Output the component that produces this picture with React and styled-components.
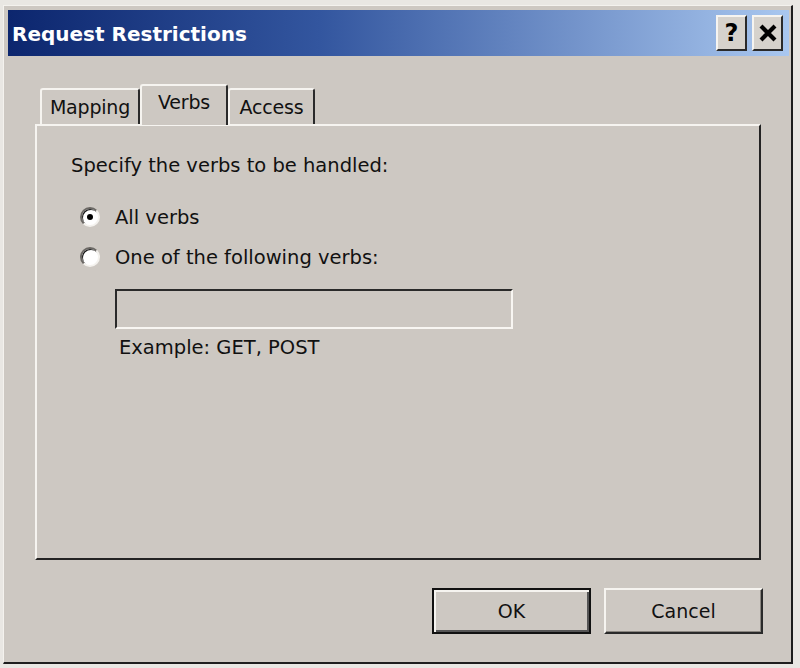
import styled, { createGlobalStyle } from "styled-components";

const GlobalStyle = createGlobalStyle`
  html, body {
    margin: 0;
    padding: 0;
    background: #e9e7e3;
    overflow: hidden;
  }
  * {
    box-sizing: border-box;
  }
`;

const Screen = styled.div`
  width: 800px;
  height: 668px;
  padding: 5px 0 0 3px;
  font-family: "DejaVu Sans", Verdana, sans-serif;
  color: #111;
`;

const Window = styled.div`
  width: 790px;
  height: 659px;
  background: #cdc8c2;
  border-top: 1px solid #f4f2ee;
  border-left: 1px solid #f4f2ee;
  border-right: 2px solid #1e1e1e;
  border-bottom: 2px solid #1e1e1e;
  padding: 4px 2px 0 4px;
  display: flex;
  flex-direction: column;
`;

const TitleBar = styled.div`
  height: 46px;
  display: flex;
  align-items: center;
  padding: 0 6px 0 4px;
  background: linear-gradient(to right, #0c266e 0%, #33569f 40%, #a9c7ef 100%);
`;

const Title = styled.div`
  flex: 1;
  color: #fff;
  font-weight: bold;
  font-size: 20px;
  padding-top: 2px;
`;

const TitleButton = styled.div`
  width: 31px;
  height: 36px;
  background: #d6d2cc;
  border-top: 2px solid #f6f4f0;
  border-left: 2px solid #f6f4f0;
  border-right: 2px solid #2a2a2a;
  border-bottom: 2px solid #2a2a2a;
  display: flex;
  align-items: center;
  justify-content: center;
  font-weight: bold;
  font-size: 24px;
  color: #000;

  & + & {
    margin-left: 5px;
  }
`;

const Body = styled.div`
  flex: 1;
  display: flex;
  flex-direction: column;
  padding: 28px 28px 0 27px;
`;

const TabRow = styled.div`
  height: 40px;
  display: flex;
  align-items: flex-end;
  padding-left: 5px;
  position: relative;
  z-index: 1;
`;

const Tab = styled.div`
  width: ${(p) => p.$w}px;
  height: ${(p) => (p.$active ? 41 : 36)}px;
  margin-bottom: ${(p) => (p.$active ? -1 : 0)}px;
  background: #cdc8c2;
  border-top: 2px solid #f6f4f0;
  border-left: 2px solid #f6f4f0;
  border-right: 2px solid #2a2a2a;
  border-radius: 3px 3px 0 0;
  display: flex;
  justify-content: center;
  padding-top: ${(p) => (p.$active ? 5 : 6)}px;
  font-size: 19px;
  letter-spacing: -0.2px;
`;

const Panel = styled.div`
  height: 436px;
  border-top: 2px solid #f6f4f0;
  border-left: 2px solid #f6f4f0;
  border-right: 2px solid #232323;
  border-bottom: 2px solid #232323;
  padding: 28px 0 0 34px;
  display: flex;
  flex-direction: column;
  align-items: flex-start;
  font-size: 19.5px;
`;

const Label = styled.div`
  height: 24px;
  line-height: 24px;
`;

const RadioRow = styled.div`
  height: 24px;
  display: flex;
  align-items: center;
  gap: 15px;
  margin-top: ${(p) => p.$top}px;
  padding-left: 9px;
`;

const RadioCircle = styled.span`
  width: 20px;
  height: 20px;
  border-radius: 50%;
  background: #fff;
  border: 2px solid;
  border-color: #6b6864 #f4f2ee #f4f2ee #6b6864;
  box-shadow: inset 1px 1px 0 #1c1c1c;
  display: flex;
  align-items: center;
  justify-content: center;

  &::after {
    content: "";
    width: 6px;
    height: 6px;
    border-radius: 50%;
    background: #000;
    display: ${(p) => (p.$checked ? "block" : "none")};
  }
`;

const Field = styled.div`
  width: 398px;
  height: 40px;
  margin: 20px 0 0 44px;
  background: #cdc8c2;
  border-top: 2px solid #2a2a2a;
  border-left: 2px solid #2a2a2a;
  border-right: 2px solid #f8f6f2;
  border-bottom: 2px solid #f8f6f2;
`;

const Hint = styled.div`
  height: 24px;
  line-height: 24px;
  margin: 7px 0 0 48px;
`;

const ButtonRow = styled.div`
  display: flex;
  justify-content: flex-end;
  gap: 13px;
  margin: 28px -2px 0 0;
`;

const Button = styled.div`
  width: 159px;
  height: 46px;
  display: flex;
  align-items: center;
  justify-content: center;
  font-size: 19px;
  background: #cdc8c2;
  border: 2px solid;
  border-color: ${(p) =>
    p.$default ? "#111 #111 #111 #111" : "#f6f4f0 #2a2a2a #2a2a2a #f6f4f0"};
  box-shadow: ${(p) =>
    p.$default
      ? "inset 2px 2px 0 #f6f4f0, inset -2px -2px 0 #555"
      : "inset -1px -1px 0 #8a8680"};
`;

function CloseGlyph() {
  return (
    <svg width="20" height="18" viewBox="0 0 20 18">
      <path d="M3 2 L17 16 M17 2 L3 16" stroke="#000" strokeWidth="4.2" />
    </svg>
  );
}

export default function App() {
  return (
    <Screen>
      <GlobalStyle />
      <Window>
        <TitleBar>
          <Title>Request Restrictions</Title>
          <TitleButton>?</TitleButton>
          <TitleButton>
            <CloseGlyph />
          </TitleButton>
        </TitleBar>
        <Body>
          <TabRow>
            <Tab $w={100}>Mapping</Tab>
            <Tab $w={88} $active>
              Verbs
            </Tab>
            <Tab $w={87}>Access</Tab>
          </TabRow>
          <Panel>
            <Label>Specify the verbs to be handled:</Label>
            <RadioRow $top={27}>
              <RadioCircle $checked />
              All verbs
            </RadioRow>
            <RadioRow $top={16}>
              <RadioCircle />
              One of the following verbs:
            </RadioRow>
            <Field />
            <Hint>Example: GET, POST</Hint>
          </Panel>
          <ButtonRow>
            <Button $default>OK</Button>
            <Button>Cancel</Button>
          </ButtonRow>
        </Body>
      </Window>
    </Screen>
  );
}
